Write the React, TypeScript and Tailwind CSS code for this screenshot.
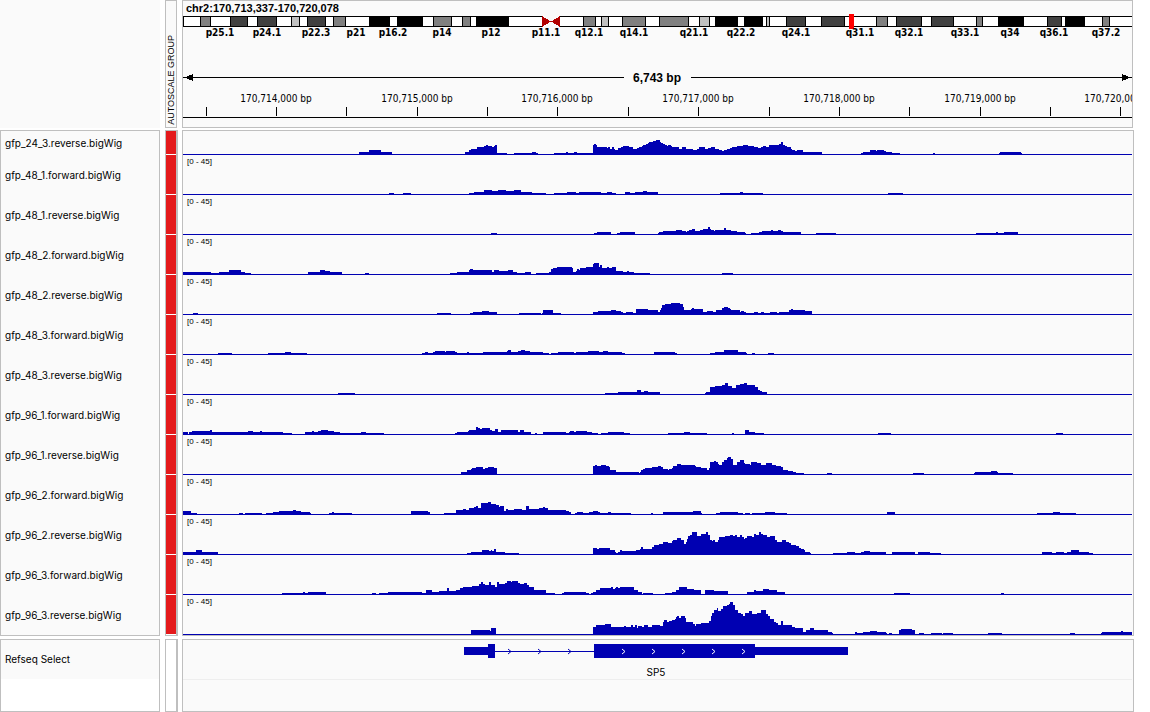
import type { ReactNode } from "react";

const START = 183;
const WIDTH = 949;
const END = START + WIDTH;
const pct = (x: number) => `${((x - START) / WIDTH) * 100}%`;

// Each coverage profile is a list of "position:height" steps; height holds until the next step.
const TRACKS: { name: string; short?: boolean; steps: string }[] = [
  {
    name: "gfp_24_3.reverse.bigWig",
    short: true,
    steps:
      "359:2 369:4 381:2 392:0 465:2 469:4 471:5 477:7 484:8 486:9 488:8 492:7 494:8 495:9 497:1 507:0 514:1 532:2 536:1 538:0 554:1 566:2 568:1 574:2 577:1 593:9 594:10 596:9 597:7 607:6 608:7 610:5 612:7 614:5 615:4 618:6 621:7 623:8 629:7 633:5 637:6 639:7 642:8 643:9 646:10 648:11 649:12 653:13 656:14 660:12 661:11 663:10 665:9 667:8 668:9 671:8 672:7 679:5 682:7 686:5 693:4 697:5 699:7 705:5 708:6 711:7 715:5 719:4 722:3 724:4 727:5 730:6 732:7 737:8 743:9 748:8 754:7 758:6 761:7 763:8 766:7 769:9 779:10 781:12 783:9 785:8 787:7 791:5 792:4 795:3 797:4 803:2 822:0 861:1 863:2 870:4 876:3 877:4 884:3 886:2 892:1 900:0 933:1 935:0 999:1 1000:2 1021:1 1022:0",
  },
  {
    name: "gfp_48_1.forward.bigWig",
    steps:
      "389:1 394:0 403:1 411:0 469:1 474:2 484:4 492:3 498:4 506:3 514:4 521:2 532:1 546:0 554:1 567:2 576:1 579:2 601:1 607:2 612:1 616:0 625:2 630:1 635:2 643:3 647:2 658:0 720:1 740:2 743:1 763:0 888:1 903:0",
  },
  {
    name: "gfp_48_1.reverse.bigWig",
    steps:
      "491:1 497:0 594:1 597:2 611:0 617:1 620:2 635:0 658:1 659:2 663:3 676:4 682:3 686:2 687:3 689:4 692:5 695:3 700:4 703:5 708:7 710:5 711:4 714:3 715:4 724:6 726:4 731:3 737:2 745:1 746:0 751:1 759:2 762:3 771:4 773:3 778:4 781:3 783:2 801:0 816:1 836:0 976:1 996:2 998:1 1004:2 1018:0",
  },
  {
    name: "gfp_48_2.forward.bigWig",
    steps:
      "183:2 211:1 219:2 229:4 241:2 245:1 251:0 308:2 320:4 325:3 330:2 342:0 365:1 369:0 450:1 457:2 469:4 470:5 473:4 492:2 494:4 499:3 508:4 513:2 517:1 525:2 531:0 536:1 549:2 551:5 553:6 557:7 572:6 573:2 576:3 577:5 579:4 580:6 586:7 593:10 594:11 599:7 600:9 602:6 607:7 609:6 612:7 616:3 623:2 627:3 629:2 634:1 650:0 722:1 733:0",
  },
  {
    name: "gfp_48_2.reverse.bigWig",
    steps:
      "193:1 198:0 437:1 451:0 470:1 473:2 482:3 489:2 497:0 519:1 541:0 542:1 543:4 553:1 561:0 593:2 598:3 611:4 616:3 621:2 623:1 626:2 633:1 636:5 648:4 658:2 660:4 661:6 662:9 665:10 671:11 680:10 683:7 684:4 691:5 692:6 694:5 703:2 707:3 713:2 716:4 722:6 724:7 728:6 730:5 731:4 740:2 741:3 744:2 746:1 754:2 758:1 761:2 764:1 770:2 777:1 779:2 789:4 791:5 793:4 805:3 812:0",
  },
  {
    name: "gfp_48_3.forward.bigWig",
    steps:
      "218:1 232:0 268:1 285:2 291:1 307:0 422:1 425:2 428:1 433:2 435:3 445:2 446:3 455:2 457:1 467:2 469:1 483:2 507:3 508:4 511:2 518:3 521:4 525:3 530:2 543:1 549:0 551:1 558:2 574:1 576:2 588:3 599:2 603:3 608:2 622:1 625:0 654:2 675:1 677:0 710:1 715:2 724:4 738:2 746:1 747:0 752:1 755:0 768:1 774:0",
  },
  {
    name: "gfp_48_3.reverse.bigWig",
    steps:
      "338:1 355:0 605:1 618:2 637:4 641:2 644:3 648:2 660:0 705:1 706:2 710:7 715:8 722:9 725:11 728:8 732:6 736:9 740:10 744:11 747:9 755:7 758:4 760:3 762:2 767:0",
  },
  {
    name: "gfp_96_1.forward.bigWig",
    steps:
      "183:2 188:0 189:2 192:3 210:4 212:2 248:3 253:2 260:3 262:2 283:1 292:0 305:2 312:3 314:2 318:3 321:4 328:3 334:2 340:1 361:2 366:1 384:0 455:1 457:2 468:3 469:4 476:7 478:6 480:5 482:6 490:4 492:3 495:5 498:2 501:4 518:2 520:4 524:2 531:0 535:1 537:0 543:2 566:1 569:2 570:3 574:2 576:3 587:2 592:1 598:0 601:1 608:2 624:1 630:0 668:1 684:2 690:1 707:0 732:1 734:0 745:4 749:2 755:1 764:0 878:1 891:0 1056:1 1063:0",
  },
  {
    name: "gfp_96_1.reverse.bigWig",
    steps:
      "461:2 467:4 471:5 472:6 476:7 483:5 485:6 488:7 494:6 497:0 593:8 595:9 597:8 601:9 606:8 609:7 610:4 616:2 639:1 640:2 641:4 643:5 645:6 652:7 658:8 661:7 663:5 668:4 669:5 672:6 673:8 677:10 681:9 695:8 696:7 701:6 707:4 709:6 710:12 714:13 716:12 718:10 719:9 722:12 724:14 727:16 728:17 731:15 733:9 737:12 740:14 744:11 745:10 750:9 751:12 757:11 761:9 766:11 772:9 776:8 781:7 783:4 788:3 793:2 796:1 804:0 827:1 832:0 913:1 924:0 974:1 975:2 991:3 997:2 998:1 1013:0",
  },
  {
    name: "gfp_96_2.forward.bigWig",
    steps:
      "183:3 191:1 197:0 239:1 243:0 245:1 262:0 266:1 273:2 279:3 293:4 296:3 301:2 310:1 311:0 329:1 332:2 334:1 352:0 411:3 428:2 430:0 444:1 456:4 463:5 466:4 469:6 474:7 476:8 478:6 481:11 488:12 491:10 496:9 499:7 500:8 504:3 506:5 508:4 514:5 522:4 526:8 529:5 539:6 543:7 545:6 548:4 566:3 569:2 571:0 575:1 577:2 583:1 589:2 593:3 598:2 600:1 608:2 611:1 631:0 651:1 653:0 663:2 693:3 701:1 702:0 716:1 720:2 738:1 743:0 745:1 750:0 752:1 765:2 775:1 787:0 887:2 895:0 1037:1 1053:2 1060:1 1076:0",
  },
  {
    name: "gfp_96_2.reverse.bigWig",
    steps:
      "183:2 196:4 202:2 218:0 467:1 471:2 482:4 489:3 491:4 492:3 494:5 496:2 505:1 519:0 593:6 597:5 599:6 610:4 615:2 616:1 618:2 620:4 622:3 636:4 640:5 641:7 643:5 652:7 654:9 659:10 663:12 668:11 672:13 673:14 677:16 681:14 684:10 686:12 687:15 688:18 690:19 692:22 697:18 701:20 706:22 708:19 710:14 712:13 713:14 715:12 718:14 719:17 725:18 730:19 733:18 735:19 737:17 740:19 742:17 744:15 745:16 747:18 752:17 754:20 756:19 759:22 761:20 763:19 767:17 770:18 775:14 777:12 782:14 786:12 789:11 791:9 796:8 799:6 801:5 804:4 805:2 810:1 811:0 833:1 847:2 855:1 861:2 864:3 870:2 886:0 892:2 915:0 918:2 930:1 941:0 1042:2 1052:1 1056:2 1064:1 1067:2 1071:4 1079:2 1089:1 1093:0",
  },
  {
    name: "gfp_96_3.forward.bigWig",
    steps:
      "282:1 303:2 305:1 308:2 326:0 372:1 376:0 379:1 388:2 422:1 426:4 432:2 439:3 447:6 449:3 456:4 460:6 463:7 472:8 479:10 481:12 483:10 485:9 489:12 491:9 495:7 497:12 499:10 505:11 507:13 511:12 512:13 518:11 520:10 524:11 527:9 529:7 534:4 546:1 555:0 562:1 564:2 586:1 589:0 591:1 593:2 596:4 600:6 611:7 613:5 615:6 616:7 618:6 620:7 634:4 638:2 642:0 643:1 653:0 665:1 672:2 676:4 679:7 687:5 694:4 701:0 705:4 714:3 728:0 747:2 754:4 756:3 763:5 769:4 777:2 785:0 894:1 910:0 1001:1 1004:0",
  },
  {
    name: "gfp_96_3.reverse.bigWig",
    steps:
      "471:4 490:3 491:6 496:0 593:7 596:9 605:10 611:7 624:8 626:7 631:9 633:7 635:9 637:6 638:8 642:7 644:9 648:7 652:9 660:8 663:12 664:14 667:12 669:13 672:14 675:15 676:17 677:18 679:16 681:18 685:16 686:12 693:10 695:8 696:10 701:11 709:13 711:18 712:21 714:24 717:26 718:23 721:25 723:28 727:29 729:30 730:32 733:29 735:24 738:21 741:20 743:18 745:21 749:23 752:20 757:21 761:24 766:20 768:18 770:15 774:12 776:11 778:9 781:13 783:9 792:7 795:6 803:2 806:4 810:6 814:4 828:2 832:1 833:0 855:2 857:1 863:2 870:3 877:2 886:1 887:0 889:1 892:0 899:4 901:5 912:4 915:0 919:1 924:0 931:1 942:0 943:1 953:0 988:1 1002:0 1070:1 1075:0 1101:1 1102:2 1121:3 1123:2",
  },
];

const DARK = "#404040";
const MID = "#808080";
const LIGHT = "#c0c0c0";
const BLACK = "#000000";

const BANDS: [number, number, string][] = [
  [200, 211, MID], [230, 248, DARK], [257, 277, DARK], [291, 300, LIGHT],
  [307, 326, DARK], [333, 346, MID], [369, 390, BLACK], [397, 423, BLACK],
  [433, 452, MID], [462, 471, MID], [476, 509, BLACK], [583, 596, MID],
  [601, 609, LIGHT], [622, 646, MID], [659, 689, MID], [699, 710, LIGHT],
  [715, 738, BLACK], [744, 763, BLACK], [766, 770, LIGHT], [786, 806, DARK],
  [821, 845, DARK], [876, 888, MID], [896, 922, DARK], [931, 954, DARK],
  [976, 983, MID], [998, 1024, BLACK], [1047, 1062, DARK], [1065, 1085, BLACK],
  [1102, 1110, MID],
];

const BAND_LABELS: [number, string][] = [
  [220, "p25.1"], [267, "p24.1"], [316, "p22.3"], [356, "p21"], [393, "p16.2"],
  [442, "p14"], [491, "p12"], [546, "p11.1"], [589, "q12.1"], [634, "q14.1"],
  [694, "q21.1"], [741, "q22.2"], [796, "q24.1"], [860, "q31.1"], [909, "q32.1"],
  [965, "q33.1"], [1010, "q34"], [1054, "q36.1"], [1106, "q37.2"],
];

const TICKS = [206, 276, 346, 417, 487, 557, 628, 698, 769, 839, 909, 980, 1050, 1120];

function profile(steps: string, height: number) {
  const base = height - 1;
  let d = `M${START} ${base}`;
  for (const step of steps.split(" ")) {
    const [x, h] = step.split(":").map(Number);
    d += `H${x}V${base - h}`;
  }
  return `${d}H${END}V${height}H${START}Z`;
}

function Plot({ top, height, children }: { top: number; height: number; children: ReactNode }) {
  return (
    <svg
      width="100%"
      height={height}
      viewBox={`${START} ${top} ${WIDTH} ${height}`}
      preserveAspectRatio="none"
      shapeRendering="crispEdges"
      className="block"
    >
      {children}
    </svg>
  );
}

function Header() {
  return (
    <svg className="block h-[126px] w-full" role="img" aria-label="Chromosome 2 ideogram and ruler">
      <Plot top={1} height={126}>
        <path d="M183 16H542V27H183ZM559 16H1132V27H559Z" fill="#000" />
        <path d="M184 17H542V26H184ZM560 17H1132V26H560Z" fill="#fff" />
        {BANDS.map(([a, b, fill]) => (
          <g key={a}>
            <rect x={a} y={16} width={b - a} height={11} fill="#000" />
            <rect x={a + 1} y={17} width={b - a - 2} height={9} fill={fill} />
          </g>
        ))}
        <path d="M542 16L551 21.5L542 27ZM560 16L551 21.5L560 27Z" fill="#b20000" />
        <rect x={849} y={14} width={5} height={15} fill="#ff0000" />
        <path d="M183 77H624V78H183ZM691 77H1132V78H691Z" />
        <path d="M184 77.5L193 74V81ZM1131 77.5L1122 74V81Z" />
        <rect x={START} y={117} width={WIDTH} height={1} />
        {TICKS.map((x) => (
          <rect key={x} x={x} y={107} width={1} height={9} />
        ))}
      </Plot>
      <text x={3} y={11} className="text-[11px] font-bold">
        chr2:170,713,337-170,720,078
      </text>
      <g
        textAnchor="middle"
        className="font-['DejaVu_Sans_Condensed','DejaVu_Sans',sans-serif] text-[10px] font-bold"
      >
        {BAND_LABELS.map(([x, label]) => (
          <text key={label} x={pct(x)} y={35}>
            {label}
          </text>
        ))}
      </g>
      <text x={pct(657)} y={81} textAnchor="middle" className="text-[12px] font-bold">
        6,743 bp
      </text>
      <g textAnchor="middle" className="font-['DejaVu_Sans_Condensed','DejaVu_Sans',sans-serif] text-[10px]">
        {TICKS.filter((_, i) => i % 2 === 1).map((x, i) => (
          <text key={x} x={pct(x)} y={101}>
            {`170,${714 + i},000 bp`}
          </text>
        ))}
      </g>
    </svg>
  );
}

function Gene() {
  return (
    <svg className="block h-[39px] w-full" role="img" aria-label="Gene SP5">
      <Plot top={640} height={39}>
        <g fill="#0000b2">
          <path d="M464 647H488V655H464ZM488 644H495V658H488ZM495 651H594V652H495ZM594 644H755V658H594ZM755 647H848V655H755Z" />
        </g>
        <g fill="none" shapeRendering="auto">
          {[508, 538, 568].map((x) => (
            <path key={x} d={`M${x} 649L${x + 3} 651.5L${x} 654`} stroke="#0000b2" />
          ))}
          {[622, 652, 682, 712, 742].map((x) => (
            <path key={x} d={`M${x} 649L${x + 3} 651.5L${x} 654`} stroke="#fff" />
          ))}
        </g>
      </Plot>
      <text x={pct(656)} y={36} textAnchor="middle" className="font-[Inter,sans-serif] text-[10px]">
        SP5
      </text>
    </svg>
  );
}

export default function App() {
  const columns = "grid grid-cols-[165px_17px_minmax(0,1fr)]";
  return (
    <main className="flex min-h-screen flex-col bg-white pr-4 font-['Liberation_Sans',Arial,sans-serif] text-black">
      <header className={`${columns} mb-0.5`}>
        <div className="w-40 bg-[#fafafa]" />
        <div className="flex w-3 items-end justify-center border border-[#bfbfbf] bg-[#fafafa] pb-0.5">
          <span className="rotate-180 text-[9px] leading-[10px] whitespace-nowrap [writing-mode:vertical-rl]">
            AUTOSCALE GROUP
          </span>
        </div>
        <div className="mr-px border border-[#bfbfbf] bg-[#fafafa]">
          <Header />
        </div>
      </header>

      <section className={`${columns} mb-[3px]`} aria-label="Coverage tracks">
        <ul className="w-40 border border-[#bfbfbf] bg-[#fafafa] font-[Inter,sans-serif] text-[10px]">
          {TRACKS.map((t) => (
            <li key={t.name} className={`flex items-center pl-1 ${t.short ? "h-6" : "h-10"}`}>
              {t.name}
            </li>
          ))}
        </ul>
        <div className="w-[13px] border border-r-2 border-[#bfbfbf] bg-white">
          {TRACKS.map((t) => (
            <div
              key={t.name}
              className={`border-b border-white bg-[#e41a1c] ${t.short ? "h-6" : "h-10"}`}
            />
          ))}
        </div>
        <div className="border border-[#bfbfbf] bg-[#fafafa] pr-px">
          {TRACKS.map((t) => {
            const height = t.short ? 24 : 40;
            return (
              <div key={t.name} className="relative">
                {!t.short && (
                  <span className="absolute top-0.5 left-1 text-[8px] leading-[9px]">
                    [0 - 45]
                  </span>
                )}
                <Plot top={0} height={height}>
                  <path d={profile(t.steps, height)} fill="#0000b2" />
                </Plot>
              </div>
            );
          })}
        </div>
      </section>

      <section className={`${columns} flex-1`} aria-label="Genes">
        <div className="w-40 border border-[#bfbfbf] bg-white font-[Inter,sans-serif] text-[10px]">
          <div className="flex h-[39px] items-center bg-[#fafafa] pl-1">Refseq Select</div>
        </div>
        <div className="w-[13px] border border-r-2 border-[#bfbfbf] bg-white" />
        <div className="border border-[#bfbfbf] bg-[#fafafa] pr-px pb-6">
          <div className="border-b border-[#eeeeee]">
            <Gene />
          </div>
        </div>
      </section>
    </main>
  );
}
